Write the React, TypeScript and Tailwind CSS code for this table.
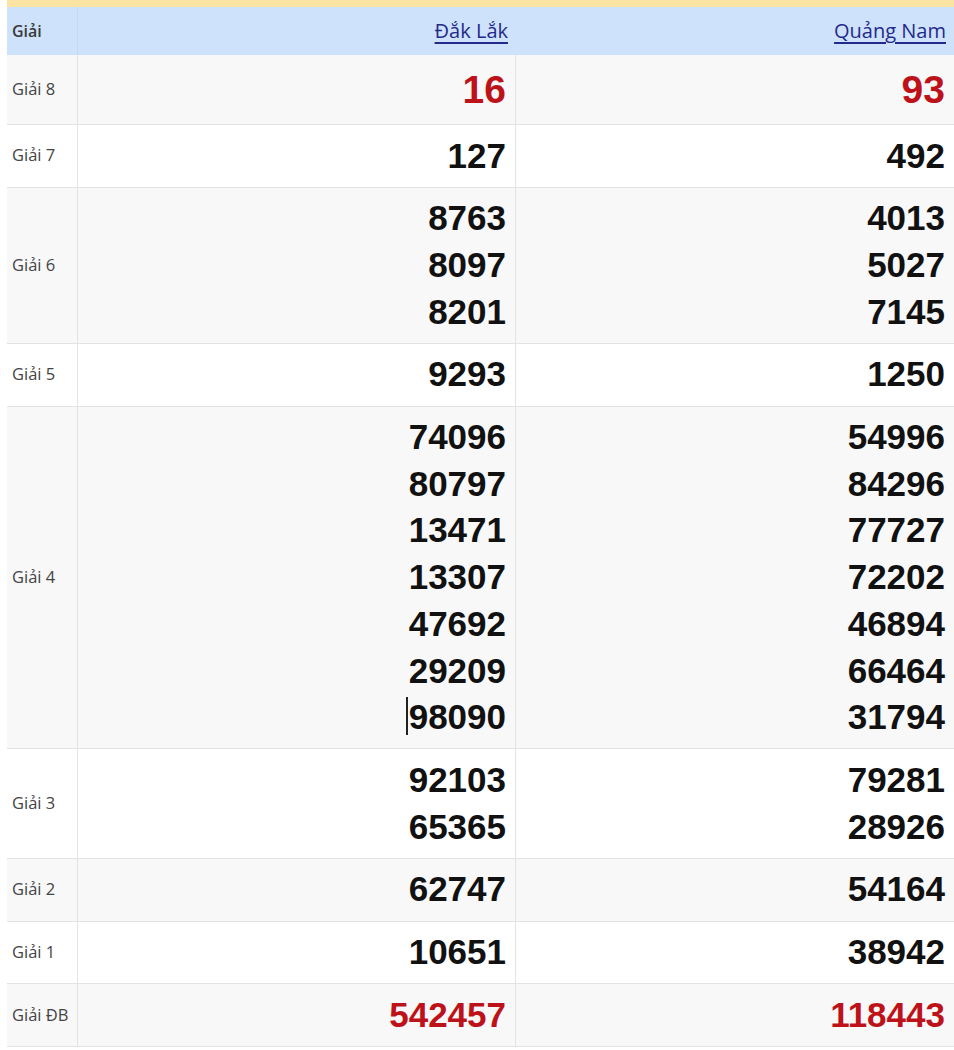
import React from "react";

type Row = { label: string; a: string[]; b: string[]; red?: boolean; big?: boolean; gray: boolean };

const rows: Row[] = [
  { label: "Giải 8", a: ["16"], b: ["93"], red: true, big: true, gray: true },
  { label: "Giải 7", a: ["127"], b: ["492"], gray: false },
  { label: "Giải 6", a: ["8763", "8097", "8201"], b: ["4013", "5027", "7145"], gray: true },
  { label: "Giải 5", a: ["9293"], b: ["1250"], gray: false },
  {
    label: "Giải 4",
    a: ["74096", "80797", "13471", "13307", "47692", "29209", "98090"],
    b: ["54996", "84296", "77727", "72202", "46894", "66464", "31794"],
    gray: true,
  },
  { label: "Giải 3", a: ["92103", "65365"], b: ["79281", "28926"], gray: false },
  { label: "Giải 2", a: ["62747"], b: ["54164"], gray: true },
  { label: "Giải 1", a: ["10651"], b: ["38942"], gray: false },
  { label: "Giải ĐB", a: ["542457"], b: ["118443"], red: true, gray: true },
];

function NumCell({ nums, red, big, last, cursor }: { nums: string[]; red?: boolean; big?: boolean; last?: boolean; cursor?: boolean }) {
  return (
    <div
      className={`flex flex-col items-end justify-center pr-[9px] py-[7.5px] ${last ? "" : "border-r border-[#e3e3e3]"} ${
        red ? "text-[#bd121a]" : "text-[#111]"
      } font-bold`}
      style={{ fontFamily: '"Liberation Sans", Arial, sans-serif' }}
    >
      {nums.map((n, i) => (
        <div
          key={i}
          className={`relative ${big ? "text-[39px] leading-[54px]" : "text-[35px] leading-[46.7px]"}`}
        >
          {cursor && i === nums.length - 1 && (
            <span className="absolute left-[-3px] top-[3px] h-[38px] w-[2px] bg-[#222]" />
          )}
          {n}
        </div>
      ))}
    </div>
  );
}

export default function App() {
  return (
    <div className="w-[954px] h-[1050px] overflow-hidden bg-white" style={{ fontFamily: '"Open Sans", "Noto Sans", sans-serif' }}>
      <div className="h-[7px] bg-[#fbe4a3] ml-[7px]" />
      <div className="ml-[7px] grid grid-cols-[71px_438px_438px]">
        <div className="h-[48px] bg-[#cfe2fb] flex items-center pl-[5px] text-[16px] font-semibold text-[#3a3a3a] border-r border-[#c6daf3]">
          Giải
        </div>
        <div className="h-[48px] bg-[#cfe2fb] flex items-center justify-end pr-[8px]">
          <a className="text-[20px] text-[#232a8c] underline underline-offset-[4px]">Đắk Lắk</a>
        </div>
        <div className="h-[48px] bg-[#cfe2fb] flex items-center justify-end pr-[8px]">
          <a className="text-[20px] text-[#232a8c] underline underline-offset-[4px]">Quảng Nam</a>
        </div>
        {rows.map((r, idx) => (
          <React.Fragment key={idx}>
            <div
              className={`flex items-center pl-[5px] text-[16.5px] text-[#444] border-r border-b border-[#e3e3e3] ${
                r.gray ? "bg-[#f8f8f8]" : "bg-white"
              }`}
            >
              {r.label}
            </div>
            <div className={`border-b border-[#e3e3e3] ${r.gray ? "bg-[#f8f8f8]" : "bg-white"}`}>
              <NumCell nums={r.a} red={r.red} big={r.big} cursor={r.label === "Giải 4"} />
            </div>
            <div className={`border-b border-[#e3e3e3] ${r.gray ? "bg-[#f8f8f8]" : "bg-white"}`}>
              <NumCell nums={r.b} red={r.red} big={r.big} last />
            </div>
          </React.Fragment>
        ))}
      </div>
    </div>
  );
}
